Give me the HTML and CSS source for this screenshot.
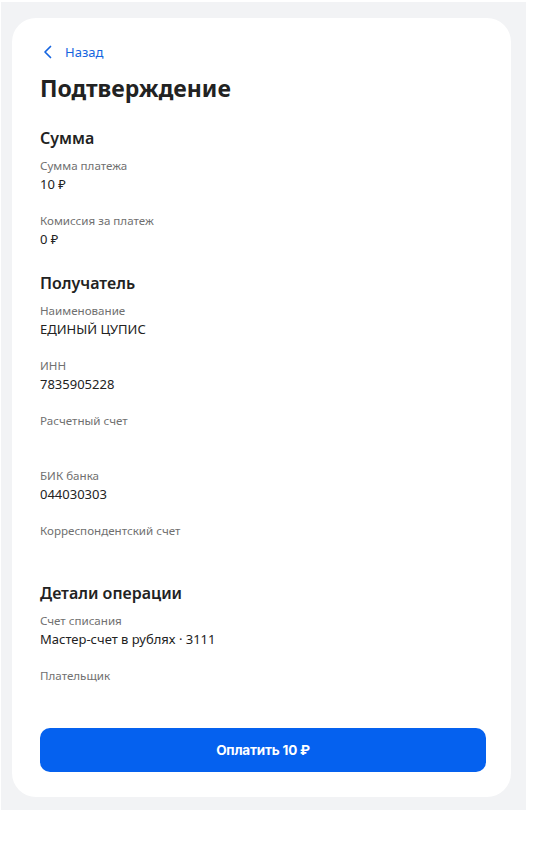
FILE: index.html
```html
<!DOCTYPE html>
<html lang="ru">
<head>
<meta charset="utf-8">
<title>Подтверждение</title>
<link rel="stylesheet" href="styles.css">
</head>
<body>
<div class="backdrop">
  <main class="card">
    <a class="back" href="#">
      <svg class="back-icon" width="10" height="14" viewBox="0 0 10 14" aria-hidden="true"><path d="M7.5 1.5 L2 7 L7.5 12.5" fill="none" stroke="#1565e0" stroke-width="1.7" stroke-linecap="round" stroke-linejoin="round"/></svg>
      <span>Назад</span>
    </a>
    <h1 class="title">Подтверждение</h1>

    <section class="section">
      <h2 class="section-title">Сумма</h2>
      <div class="field"><div class="label">Сумма платежа</div><div class="value">10 ₽</div></div>
      <div class="field"><div class="label">Комиссия за платеж</div><div class="value">0 ₽</div></div>
    </section>

    <section class="section">
      <h2 class="section-title">Получатель</h2>
      <div class="field"><div class="label">Наименование</div><div class="value">ЕДИНЫЙ ЦУПИС</div></div>
      <div class="field"><div class="label">ИНН</div><div class="value">7835905228</div></div>
      <div class="field"><div class="label">Расчетный счет</div><div class="value"></div></div>
      <div class="field"><div class="label">БИК банка</div><div class="value">044030303</div></div>
      <div class="field"><div class="label">Корреспондентский счет</div><div class="value"></div></div>
    </section>

    <section class="section">
      <h2 class="section-title">Детали операции</h2>
      <div class="field"><div class="label">Счет списания</div><div class="value">Мастер-счет в рублях · 3111</div></div>
      <div class="field"><div class="label">Плательщик</div><div class="value"></div></div>
    </section>

    <button class="pay" type="button">Оплатить 10 ₽</button>
  </main>
</div>
</body>
</html>
```

FILE: styles.css
```css
html, body {
  margin: 0;
  padding: 0;
  background: #ffffff;
}
body {
  font-family: "Noto Sans", "Open Sans", sans-serif;
  color: #333333;
  width: 535px;
  height: 844px;
}
.backdrop {
  margin: 2px 0 0 1px;
  width: 525px;
  height: 808px;
  background: #f2f3f5;
  padding: 16px 0 0 11px;
  box-sizing: border-box;
}
.card {
  width: 499px;
  height: 779px;
  background: #ffffff;
  border-radius: 24px;
  box-sizing: border-box;
  padding: 25px 25px 0 28px;
  display: flex;
  flex-direction: column;
}
.back {
  display: flex;
  align-items: center;
  gap: 12px;
  color: #1565e0;
  text-decoration: none;
  font-size: 13px;
  line-height: 18px;
  height: 18px;
  padding-left: 3px;
}
.back-icon { display: block; }
.title {
  margin: 12px 0 0 0;
  font-size: 23px;
  line-height: 30px;
  font-weight: 700;
  color: #222222;
  letter-spacing: 0;
}
.section {
  display: flex;
  flex-direction: column;
}
.section:first-of-type { margin-top: 24px; }
.section + .section { margin-top: 10px; }
.section-title {
  margin: 0;
  font-size: 16px;
  line-height: 22px;
  font-weight: 600;
  color: #222222;
}
.field {
  margin-top: 9px;
  height: 49px;
}
.field + .field { margin-top: 6px; }
.label {
  font-size: 11.6px;
  line-height: 16px;
  color: #707070;
}
.value {
  margin-top: 1px;
  font-size: 13px;
  line-height: 18px;
  color: #222222;
}
.pay {
  margin-top: auto;
  margin-bottom: 25px;
  width: 446px;
  height: 44px;
  border: none;
  border-radius: 10px;
  background: #0561ef;
  color: #ffffff;
  font-family: "Inter", "Roboto", sans-serif;
  font-weight: 700;
  font-size: 13.5px;
  letter-spacing: -0.2px;
}
```
